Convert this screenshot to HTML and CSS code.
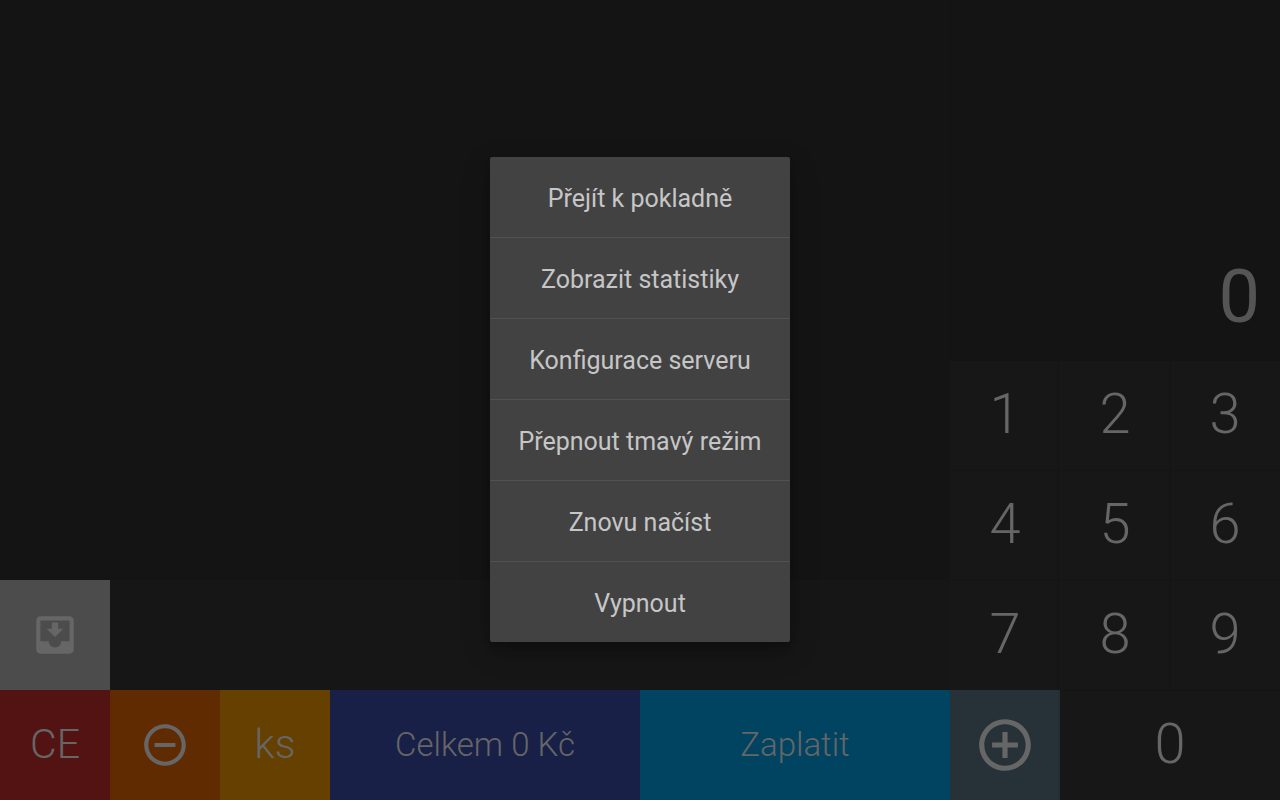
FILE: index.html
```html
<!DOCTYPE html>
<html lang="cs">
<head>
<meta charset="utf-8">
<title>Pokladna</title>
<link rel="stylesheet" href="styles.css">
</head>
<body>
<main class="app">
  <section class="left">
    <div class="receipt"></div>
    <div class="shelf">
      <div class="inbox"><svg class="icon" viewBox="0 0 24 24"><path d="M16 9h-2.5V6h-3v3H8l4 4zM19 3H4.99C3.88 3 3 3.9 3 5v14c0 1.1.88 2 1.99 2H19c1.1 0 2-.9 2-2V5c0-1.1-.9-2-2-2zm0 12h-4c0 1.66-1.35 3-3 3s-3-1.34-3-3H4.99V5H19z"/></svg></div>
    </div>
    <div class="actions">
      <div class="action clear">CE</div>
      <div class="action minus"><svg class="icon" viewBox="0 0 24 24"><path d="M7 11v2h10v-2zM12 2C6.48 2 2 6.48 2 12s4.48 10 10 10 10-4.48 10-10S17.52 2 12 2zm0 18c-4.41 0-8-3.59-8-8s3.59-8 8-8 8 3.59 8 8-3.59 8-8 8z"/></svg></div>
      <div class="action pieces">ks</div>
      <div class="action total">Celkem 0 Kč</div>
      <div class="action pay">Zaplatit</div>
    </div>
  </section>
  <section class="right">
    <div class="display">0</div>
    <div class="keypad">
      <div class="key first">1</div><div class="key">2</div><div class="key last">3</div>
      <div class="key first">4</div><div class="key">5</div><div class="key last">6</div>
      <div class="key first">7</div><div class="key">8</div><div class="key last">9</div>
      <div class="key plus"><svg class="icon icon-large" viewBox="0 0 24 24"><path d="M13 7h-2v4H7v2h4v4h2v-4h4v-2h-4zM12 2C6.48 2 2 6.48 2 12s4.48 10 10 10 10-4.48 10-10S17.52 2 12 2zm0 18c-4.41 0-8-3.59-8-8s3.59-8 8-8 8 3.59 8 8-3.59 8-8 8z"/></svg></div>
      <div class="key zero">0</div>
    </div>
  </section>
</main>
<div class="overlay">
  <nav class="menu">
    <div class="item">Přejít k pokladně</div>
    <div class="item">Zobrazit statistiky</div>
    <div class="item">Konfigurace serveru</div>
    <div class="item">Přepnout tmavý režim</div>
    <div class="item">Znovu načíst</div>
    <div class="item">Vypnout</div>
  </nav>
</div>
</body>
</html>
```
FILE: styles.css
```css
* { box-sizing: border-box; }
body {
  margin: 0;
  height: 800px;
  overflow: hidden;
  background: #141414;
  font-family: Roboto, sans-serif;
  font-weight: 300;
  color: #666;
}
.app { display: flex; height: 800px; }
.left { display: flex; flex-direction: column; width: 950px; }
.receipt { flex: 1; background: #141414; }
.shelf { height: 110px; background: #161616; }
.inbox {
  display: flex;
  align-items: center;
  justify-content: center;
  width: 110px;
  height: 110px;
  background: #4c4c4c;
}
.icon { width: 50px; height: 50px; fill: #666; }
.icon-large { width: 62px; height: 62px; }
.actions {
  display: grid;
  grid-template-columns: 110px 110px 110px 310px 310px;
  height: 110px;
}
.action {
  display: flex;
  align-items: center;
  justify-content: center;
  padding-bottom: 2px;
  font-size: 41px;
}
.clear { background: #541313; }
.minus { padding-bottom: 0; background: #602b00; }
.pieces { background: #664000; }
.total { background: #192048; font-size: 33px; }
.pay { background: #014462; font-size: 33px; }
.right { display: flex; flex-direction: column; width: 330px; }
.display {
  display: flex;
  align-items: flex-end;
  justify-content: flex-end;
  height: 360px;
  padding: 0 20px 20px 0;
  border-left: 1px solid #121212;
  font-size: 74px;
  font-weight: 400;
  color: #555;
}
.keypad {
  display: grid;
  grid-template-columns: repeat(3, 110px);
  grid-template-rows: repeat(4, 110px);
}
.key {
  display: flex;
  align-items: center;
  justify-content: center;
  padding-bottom: 2px;
  background: #171717;
  box-shadow: inset 0 1px #141414;
  font-size: 56px;
}
.first { background: linear-gradient(#141414, #141414) 108px 0 / 1px 100% no-repeat #171717; }
.last { box-shadow: inset 0 1px #141414, inset 1px 0 #141414; }
.plus {
  padding-bottom: 0;
  background: linear-gradient(#232e34, #232e34) 108px 0 / 1px 100% no-repeat #263238;
  box-shadow: none;
}
.zero { grid-column: span 2; }
.overlay {
  position: absolute;
  inset: 0;
  display: flex;
  align-items: center;
  justify-content: center;
  padding-bottom: 1px;
}
.menu {
  width: 300px;
  border-radius: 2px;
  background: #424242;
  box-shadow: 0 10px 30px rgba(0,0,0,.19), 0 6px 10px rgba(0,0,0,.23);
  color: #c6c6c6;
  font-size: 25px;
  font-weight: 400;
}
.item {
  display: flex;
  align-items: center;
  justify-content: center;
  height: 81px;
  padding-top: 3px;
  border-bottom: 1px solid #515151;
}
.item:last-child { height: 80px; border-bottom: 0; }
```
